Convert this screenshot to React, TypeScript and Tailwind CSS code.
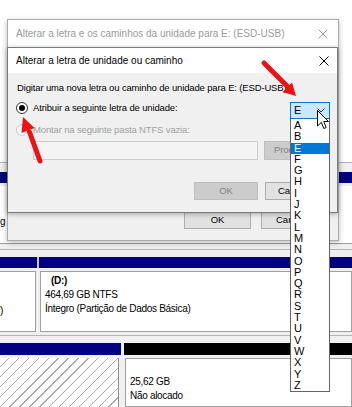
import React from "react";

const driveLetters = ["A", "B", "E", "F", "G", "H", "I", "J", "K", "L", "M", "N", "O", "P", "Q", "R", "S", "T", "U", "V", "W", "X", "Y", "Z"];

function CloseIcon({ color }: { color: string }) {
  return (
    <svg width="10" height="10" viewBox="0 0 10 10">
      <path d="M0.5 0.5L9.5 9.5M9.5 0.5L0.5 9.5" stroke={color} strokeWidth="1" fill="none" />
    </svg>
  );
}

function WinButton({ label, disabled, className }: { label: string; disabled?: boolean; className?: string }) {
  const look = disabled
    ? "border-[#bfbfbf] bg-[#cccccc] text-[#838383]"
    : "border-[#adadad] bg-[#e1e1e1] text-black";
  return (
    <div className={`h-[18px] flex items-center justify-center border text-[9.5px] ${look} ${className ?? ""}`}>
      {label}
    </div>
  );
}

// botao cuja parte direita fica por baixo da lista suspensa: o texto e cortado ali
function CutButton({ label, disabled, className, textClass }: { label: string; disabled?: boolean; className?: string; textClass: string }) {
  const look = disabled
    ? "border-[#bfbfbf] bg-[#cccccc] text-[#838383]"
    : "border-[#adadad] bg-[#e1e1e1] text-black";
  return (
    <div className={`h-[18px] flex items-center border text-[9.5px] ${look} ${className ?? ""}`}>
      <span className={`overflow-hidden whitespace-nowrap ${textClass}`}>{label}</span>
    </div>
  );
}

function DiskMap() {
  return (
    <div className="flex flex-col h-full bg-[#f0f0f0] text-[10px] tracking-[-0.3px]">
      <div className="h-[162px] bg-white" />
      <div className="h-px bg-[#b4b4b4]" />
      <div className="h-[9px]" />
      {/* linha 1 (quase toda coberta) */}
      <div className="h-[11px] bg-[#000080]" />
      <div className="h-[3px]" />
      <div className="h-[58px] bg-white border-b border-[#a0a0a0] pt-[29px]">
        <div className="leading-[14px]">g</div>
      </div>
      <div className="h-[5px]" />
      <div className="h-px bg-[#b4b4b4]" />
      <div className="h-[7px]" />
      {/* linha 2 */}
      <div className="h-[11px] flex gap-[2px] bg-[#c8c8e8]">
        <div className="w-[37px] bg-[#000080]" />
        <div className="flex-1 bg-[#000080]" />
      </div>
      <div className="h-[3px]" />
      <div className="h-[61px] flex gap-[4px]">
        <div className="w-[36px] bg-white border-y border-r border-[#a0a0a0] pt-[32px]">
          <div className="leading-[14px]">)</div>
        </div>
        <div className="flex-1 bg-white border border-[#a0a0a0] pl-[4px] pt-[2px] leading-[14px]">
          <div className="font-bold pl-[6px]">(D:)</div>
          <div>464,69 GB NTFS</div>
          <div>Íntegro (Partição de Dados Básica)</div>
        </div>
      </div>
      <div className="h-[3px]" />
      <div className="h-px bg-[#b4b4b4]" />
      <div className="h-[7px]" />
      {/* linha 3 */}
      <div className="h-[12px] flex gap-[3px]">
        <div className="w-[121px] bg-[#000080]" />
        <div className="flex-1 bg-black" />
      </div>
      <div className="h-[3px]" />
      <div className="flex-1 flex gap-[6px]">
        <div className="w-[119px] border-r border-[#909090] bg-[repeating-linear-gradient(135deg,#ffffff_0px,#ffffff_6px,#a8a8a8_6px,#a8a8a8_7px)]" />
        <div className="flex-1 bg-white border border-[#a0a0a0] pl-[4px] pt-[2px] leading-[14px]">
          <div className="h-[14px]" />
          <div>25,62 GB</div>
          <div>Não alocado</div>
        </div>
      </div>
    </div>
  );
}

function OuterDialog() {
  return (
    <div className="absolute left-[7px] top-[19px] w-[332px] h-[222px] flex flex-col border border-[#aaaaaa] bg-[#f0f0f0] shadow-[0_2px_6px_rgba(0,0,0,0.25)]">
      <div className="h-[27px] bg-white flex items-center justify-between pl-[8px] pr-[10px]">
        <span className="text-[10px] text-[#9a9a9a]">Alterar a letra e os caminhos da unidade para E: (ESD-USB)</span>
        <CloseIcon color="#a0a0a0" />
      </div>
      <div className="flex-1 flex items-end justify-end gap-[10px] pr-[10px] pb-[11px]">
        <WinButton label="OK" className="w-[67px]" />
        <CutButton label="Cancelar" className="w-[67px]" textClass="ml-[14px] w-[14px]" />
      </div>
    </div>
  );
}

function InnerDialog() {
  return (
    <div className="absolute left-[7px] top-[47px] w-[331px] h-[166px] flex flex-col border border-[#7a7a7a] bg-[#f0f0f0] shadow-[0_1px_5px_rgba(0,0,0,0.3)]">
      <div className="h-[25px] bg-white flex items-center justify-between pl-[8px] pr-[8px]">
        <span className="text-[10px]">Alterar a letra de unidade ou caminho</span>
        <CloseIcon color="#000000" />
      </div>
      <div className="flex flex-col pl-[8px] pr-[8px] pt-[9px] text-[9.5px] tracking-[-0.15px]">
        <div className="h-[12px] leading-[12px] pl-[1px]">Digitar uma nova letra ou caminho de unidade para E: (ESD-USB)</div>
        <div className="mt-[8px] h-[12px] flex items-center gap-[5px]">
          <div className="w-[12px] h-[12px] rounded-full border border-[#333333] bg-white flex items-center justify-center">
            <div className="w-[6px] h-[6px] rounded-full bg-black" />
          </div>
          <span className="leading-[12px]">Atribuir a seguinte letra de unidade:</span>
        </div>
        <div className="mt-[10px] h-[12px] flex items-center gap-[5px]">
          <div className="w-[12px] h-[12px] rounded-full border border-[#cccccc] bg-[#f6f6f6]" />
          <span className="leading-[12px] text-[#a0a0a0]">Montar na seguinte pasta NTFS vazia:</span>
        </div>
        <div className="mt-[5px] h-[19px] flex gap-[6px] pl-[17px]">
          <div className="w-[225px] border border-[#cccccc] bg-[#f4f4f4]" />
          <CutButton label="Procurar..." disabled className="w-[65px] h-[19px]" textClass="ml-[9px] w-[17px]" />
        </div>
        <div className="mt-[22px] flex justify-end gap-[7px]">
          <WinButton label="OK" disabled className="w-[64px]" />
          <CutButton label="Cancelar" className="w-[64px]" textClass="ml-[12px] w-[12px]" />
        </div>
      </div>
    </div>
  );
}

function DriveDropdown() {
  return (
    <div className="absolute left-[290px] top-[102px] w-[40px] flex flex-col">
      <div className="h-[17px] border border-[#0078d7] bg-[#cce8ff] flex items-center justify-between pl-[3px] pr-[4px] text-[11px]">
        <span>E</span>
        <svg width="8" height="5" viewBox="0 0 8 5">
          <path d="M0.5 0.5L4 4L7.5 0.5" stroke="#333333" strokeWidth="1" fill="none" />
        </svg>
      </div>
      <div className="h-[273px] border border-t-0 border-[#646464] bg-white flex flex-col text-[11px] pt-px">
        {driveLetters.map((l) => (
          <div
            key={l}
            className={l === "E" ? "h-[11.3px] leading-[11.3px] pl-[3px] bg-[#0078d7] text-white" : "h-[11.3px] leading-[11.3px] pl-[3px]"}
          >
            {l}
          </div>
        ))}
      </div>
    </div>
  );
}

function Cursor() {
  return (
    <svg className="absolute left-[317px] top-[110px]" width="13" height="20" viewBox="0 0 13 20">
      <path d="M0.5 0.5L0.5 16L4.3 12.4L6.8 18.5L9.2 17.5L6.7 11.5L11.5 11.5Z" fill="#ffffff" stroke="#000000" strokeWidth="1" strokeLinejoin="round" />
    </svg>
  );
}

function RedArrows() {
  return (
    <>
      <svg className="absolute left-[256px] top-[56px]" width="46" height="46" viewBox="0 0 46 46">
        <line x1="8" y1="7" x2="32" y2="31" stroke="#ee1111" strokeWidth="5" strokeLinecap="round" />
        <polygon points="40,40 26.5,36 36,26.5" fill="#ee1111" />
      </svg>
      <svg className="absolute left-[14px] top-[110px]" width="34" height="56" viewBox="0 0 34 56">
        <line x1="26" y1="51" x2="15.5" y2="22" stroke="#ee1111" strokeWidth="5" strokeLinecap="round" />
        <polygon points="9,7 20.5,18 7.5,23" fill="#ee1111" />
      </svg>
    </>
  );
}

export default function App() {
  return (
    <div className="relative w-[352px] h-[407px] overflow-hidden bg-white text-black font-['Liberation_Sans',Arial,sans-serif]">
      <DiskMap />
      <OuterDialog />
      <InnerDialog />
      <DriveDropdown />
      <Cursor />
      <RedArrows />
    </div>
  );
}
